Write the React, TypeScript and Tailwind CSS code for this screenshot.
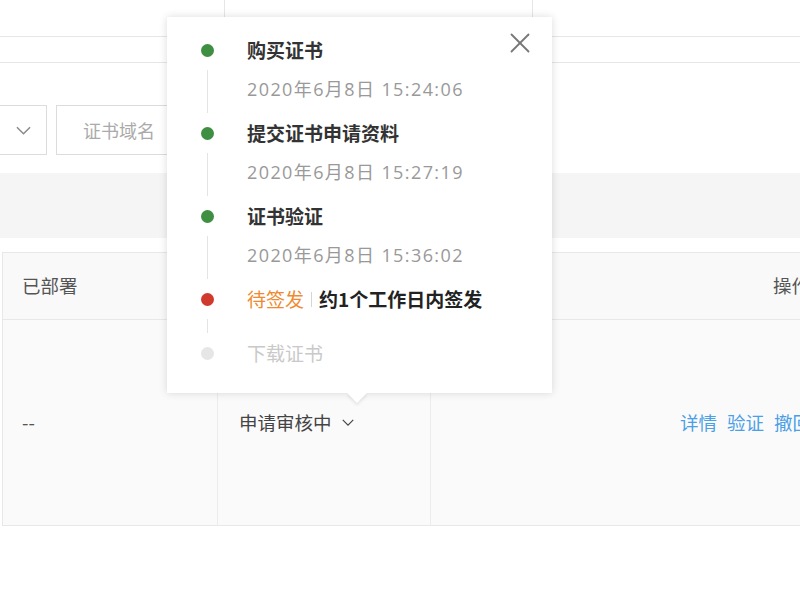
import { X } from "lucide-react";

const font = { fontFamily: '"Noto Sans CJK SC", "Noto Sans", sans-serif' };
const timeFont = { fontFamily: '"Open Sans", "Noto Sans CJK SC", sans-serif' };

const Dot = ({ color }: { color: string }) => (
    <div className="w-[80px] flex justify-center items-center">
        <span className={"block w-[13px] h-[13px] rounded-full " + color}></span>
    </div>
);

const Line = ({ h }: { h: string }) => (
    <div className={"w-[80px] flex justify-center " + h}>
        <span className="block w-px h-full bg-[#e4e4e4]"></span>
    </div>
);

const Step = (props: { title: string; time: string }) => (
    <>
        <div className="flex h-[40px] items-center">
            <Dot color="bg-[#3f8f42]" />
            <span className="text-[19px] font-bold text-[#333]">{props.title}</span>
        </div>
        <div className="flex h-[43px]">
            <Line h="h-[43px]" />
            <span className="h-[39px] leading-[39px] text-[18px] tracking-[1.4px] text-[#999]" style={timeFont}>
                {props.time}
            </span>
        </div>
    </>
);

const Popover = () => {
    return (
        <div className="absolute left-[167px] top-[17px] w-[385px] h-[376px] bg-white shadow-[0_0_8px_rgba(0,0,0,0.14)] pt-[13px]">
            <button className="absolute right-[15px] top-[9px] text-[#777]">
                <X size={34} strokeWidth={1.3} />
            </button>
            <Step title="购买证书" time="2020年6月8日 15:24:06" />
            <Step title="提交证书申请资料" time="2020年6月8日 15:27:19" />
            <Step title="证书验证" time="2020年6月8日 15:36:02" />
            <div className="flex h-[40px] items-center">
                <Dot color="bg-[#cf3a2c]" />
                <span className="text-[19px] text-[#ef8a30]">待签发</span>
                <span className="block w-px h-[15px] bg-[#d5d5d5] mx-[7px]"></span>
                <span className="text-[19px] font-bold text-[#222]">约1个工作日内签发</span>
            </div>
            <Line h="h-[14px]" />
            <div className="flex h-[40px] items-center">
                <Dot color="bg-[#e6e6e6]" />
                <span className="text-[19px] text-[#c9c9c9]">下载证书</span>
            </div>
            {/* arrow */}
            <div className="absolute left-[183px] -bottom-[7px] w-[14px] h-[14px] rotate-45 bg-white shadow-[2px_2px_3px_rgba(0,0,0,0.08)]"></div>
        </div>
    );
};

const Chevron = ({ w, h, color }: { w: number; h: number; color: string }) => (
    <svg width={w} height={h} viewBox="0 0 16 9" fill="none" stroke={color} strokeWidth={1.6}>
        <polyline points="1,1 8,8 15,1" />
    </svg>
);

export default function App() {
    return (
        <div className="relative w-[800px] h-[600px] overflow-hidden bg-white" style={font}>
            {/* top bars */}
            <div className="flex h-[37px] border-b border-[#e6e6e6]">
                <div className="w-[225px] border-r border-[#e6e6e6]"></div>
                <div className="w-[308px] border-r border-[#e6e6e6]"></div>
            </div>
            <div className="h-[26px] border-b border-[#e6e6e6]"></div>

            {/* filter row */}
            <div className="flex mt-[42px] h-[50px] gap-[9px]">
                <div className="w-[48px] -ml-[1px] border border-[#dcdcdc] flex items-center justify-center">
                    <Chevron w={15} h={9} color="#8a8a8a" />
                </div>
                <div className="w-[240px] border border-[#dcdcdc] flex items-center pl-[26px] text-[18px] text-[#aaa]">
                    证书域名
                </div>
            </div>

            <div className="mt-[18px] h-[65px] bg-[#f5f5f5]"></div>

            {/* table */}
            <div className="mt-[14px] ml-[2px] w-[830px] border-l border-t border-[#e8e8e8]">
                <div className="flex h-[67px] bg-[#f9f9f9] border-b border-[#e8e8e8] text-[18.5px] text-[#555]">
                    <div className="w-[215px] flex items-center pl-[19px] border-r border-[#ececec]">已部署</div>
                    <div className="w-[213px] border-r border-[#ececec]"></div>
                    <div className="flex-1 flex items-center justify-end pr-[22px]">操作</div>
                </div>
                <div className="flex h-[206px] bg-[#fafafa] border-b border-[#e8e8e8] text-[18.5px] text-[#555]">
                    <div className="w-[215px] flex items-center pl-[19px] border-r border-[#ececec]">--</div>
                    <div className="w-[213px] flex items-center pl-[21px] gap-[10px] border-r border-[#ececec] text-[#444]">
                        申请审核中
                        <Chevron w={12} h={7} color="#444" />
                    </div>
                    <div className="flex-1 flex items-center justify-end gap-[10px] pr-[21px] text-[#4a9fe6]">
                        <span>详情</span>
                        <span>验证</span>
                        <span>撤回</span>
                    </div>
                </div>
            </div>

            <Popover />
        </div>
    );
}
